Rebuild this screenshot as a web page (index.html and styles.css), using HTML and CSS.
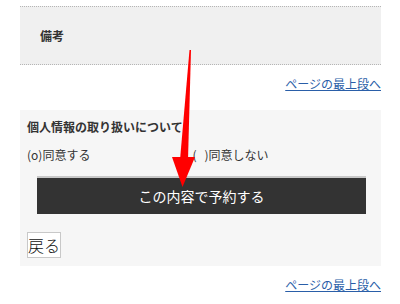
FILE: index.html
```html
<!DOCTYPE html>
<html lang="ja">
<head>
<meta charset="utf-8">
<link rel="stylesheet" href="styles.css">
</head>
<body>
<div class="page">
  <div class="note"><span class="note-label">備考</span></div>
  <div class="toplink"><a href="#">ページの最上段へ</a></div>
  <div class="consent">
    <div class="consent-title">個人情報の取り扱いについて</div>
    <div class="choices">
      <span class="choice">(o)同意する</span>
      <span class="choice choice-no">(&nbsp;&nbsp;&nbsp;)同意しない</span>
    </div>
    <div class="submit-wrap"><button class="submit">この内容で予約する</button></div>
    <button class="back">戻る</button>
  </div>
  <div class="toplink bottom"><a href="#">ページの最上段へ</a></div>
</div>
<svg class="arrow" width="400" height="304" viewBox="0 0 400 304">
  <polygon points="189.5,50 191,50 188,160 180,160" fill="#ff0000"/>
  <polygon points="172,157 195,157 182.5,187" fill="#ff0000"/>
</svg>
</body>
</html>
```
FILE: styles.css
```css
html, body { margin: 0; padding: 0; background: #fff; }
body {
  font-family: "Noto Sans CJK JP", "Noto Sans", sans-serif;
  font-size: 12px;
  color: #333;
  position: relative;
  width: 400px;
  height: 304px;
  overflow: hidden;
}
.page {
  padding: 6px 19px 0 20px;
}
.note {
  background: #f0f0f0;
  border-top: 1px dotted #b5b5b5;
  border-bottom: 1px dotted #b5b5b5;
  height: 57px;
  display: flex;
  align-items: center;
  padding-left: 20px;
}
.note-label {
  font-weight: bold;
  font-size: 12px;
  color: #333;
}
.toplink {
  text-align: right;
  margin-top: 10px;
  height: 28px;
  line-height: 18px;
}
.toplink a {
  color: #2a5ea8;
  text-decoration: underline;
  font-size: 12px;
}
.toplink.bottom {
  margin-top: 10px;
}
.consent {
  background: #f6f6f6;
  padding: 8px 0 8px 7px;
  margin-top: 7px;
}
.consent-title {
  font-weight: bold;
  line-height: 18px;
}
.choices {
  display: flex;
  margin-top: 10px;
  line-height: 18px;
}
.choice-no {
  margin-left: 102px;
}
.submit-wrap {
  padding: 12px 15px 0 10px;
}
.submit {
  display: block;
  width: 329px;
  height: 38px;
  border: none;
  border-top: 2px solid #c8c8c8;
  background: #333;
  color: #fff;
  font-family: "Noto Sans CJK JP", sans-serif;
  font-size: 14px;
  padding: 0;
}
.back {
  display: block;
  margin-top: 18px;
  width: 34px;
  height: 26px;
  padding: 0;
  border: 1px solid #c8c8c8;
  background: #fff;
  color: #111;
  font-family: "Noto Sans CJK JP", sans-serif;
  font-size: 16px;
  font-weight: 300;
  line-height: 24px;
}
.arrow {
  position: absolute;
  left: 0;
  top: 0;
  pointer-events: none;
}
```
